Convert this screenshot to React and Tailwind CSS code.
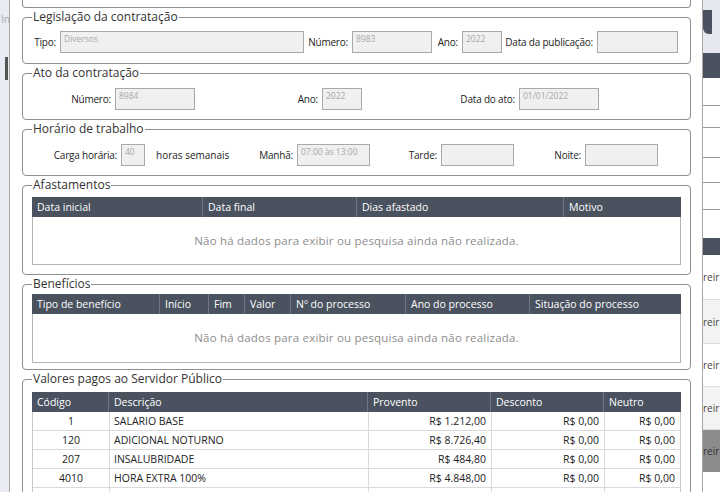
import React from 'react';

const Label = ({ className, children }) => (
  <span className={`shrink-0 text-right pr-[4px] text-[10px] leading-[22px] text-[#222] whitespace-nowrap tracking-[-0.2px] ${className}`}>
    {children}
  </span>
);

const Campo = ({ className, value }) => (
  <div className={`shrink-0 h-[22px] bg-[#f0f0f0] border border-[#a9a9a9] px-[3px] pt-[3px] text-[8.5px] leading-none text-[#a8a8a8] ${className}`}>
    {value}
  </div>
);

const Grupo = ({ titulo, className, children }) => (
  <fieldset className={`border border-[#8f8f8f] rounded-[4px] px-[9px] ${className}`}>
    <legend className="px-[1px] text-[12px] leading-[16px] text-[#333]">{titulo}</legend>
    {children}
  </fieldset>
);

const Cabecalho = ({ colunas }) => (
  <div className="flex h-[20px] bg-[#4a525f] text-white text-[10.5px] leading-[20px]">
    {colunas.map((c, i) => (
      <div key={c.nome} className={`${c.w} pl-[5px] whitespace-nowrap ${i > 0 ? 'border-l border-[#6d7581]' : ''}`}>
        {c.nome}
      </div>
    ))}
  </div>
);

const Vazio = ({ className }) => (
  <div className={`flex items-center justify-center bg-white border-x border-b border-[#b4b4b4] text-[11.5px] text-[#8d8d8d] tracking-[0.2px] ${className}`}>
    Não há dados para exibir ou pesquisa ainda não realizada.
  </div>
);

const colAfast = [
  { nome: 'Data inicial', w: 'w-[170px]' },
  { nome: 'Data final', w: 'w-[154px]' },
  { nome: 'Dias afastado', w: 'w-[207px]' },
  { nome: 'Motivo', w: 'flex-1' },
];

const colBenef = [
  { nome: 'Tipo de benefício', w: 'w-[127px]' },
  { nome: 'Início', w: 'w-[49px]' },
  { nome: 'Fim', w: 'w-[36px]' },
  { nome: 'Valor', w: 'w-[46px]' },
  { nome: 'Nº do processo', w: 'w-[115px]' },
  { nome: 'Ano do processo', w: 'w-[124px]' },
  { nome: 'Situação do processo', w: 'flex-1' },
];

const colValores = [
  { nome: 'Código', w: 'w-[76px]' },
  { nome: 'Descrição', w: 'w-[259px]' },
  { nome: 'Provento', w: 'w-[123px]' },
  { nome: 'Desconto', w: 'w-[113px]' },
  { nome: 'Neutro', w: 'flex-1' },
];

const valores = [
  ['1', 'SALARIO BASE', 'R$ 1.212,00', 'R$ 0,00', 'R$ 0,00'],
  ['120', 'ADICIONAL NOTURNO', 'R$ 8.726,40', 'R$ 0,00', 'R$ 0,00'],
  ['207', 'INSALUBRIDADE', 'R$ 484,80', 'R$ 0,00', 'R$ 0,00'],
  ['4010', 'HORA EXTRA 100%', 'R$ 4.848,00', 'R$ 0,00', 'R$ 0,00'],
  ['8001', 'VALE', 'R$ 0,00', 'R$ 212,00', 'R$ 0,00'],
];

const FaixaDireita = () => (
  <div className="w-[17px] shrink-0 flex flex-col bg-[#e5e8ef] overflow-hidden">
    <div className="h-[10px]" />
    <div className="h-[25px] flex">
      <div className="w-[9px] bg-[#4a525f] rounded-bl-[6px]" />
    </div>
    <div className="h-[20px]" />
    <div className="h-[25px] bg-[#4a525f]" />
    <div className="h-[165px] bg-white flex flex-col">
      <div className="h-[28px] border-b border-[#9a9a9a]" />
      <div className="h-[22px] border-b border-[#9a9a9a]" />
      <div className="h-[30px] border-b border-[#9a9a9a]" />
      <div className="h-[25px] border-b border-[#9a9a9a]" />
      <div className="h-[27px] border-b border-[#9a9a9a]" />
    </div>
    <div className="h-[18px] bg-[#4a525f]" />
    <div className="bg-white text-[10px] text-[#444] leading-none">
      <div className="h-[45px] flex items-center border-b border-[#ddd]">reir</div>
      <div className="h-[44px] flex items-center border-b border-[#ddd] bg-[#f3f3f3]">reir</div>
      <div className="h-[43px] flex items-center border-b border-[#ddd]">reir</div>
      <div className="h-[43px] flex items-center border-b border-[#ddd] bg-[#f3f3f3]">reir</div>
      <div className="h-[42px] flex items-center bg-[#8c8c8c] text-[#333]">reir</div>
      <div className="h-[20px]" />
    </div>
  </div>
);

export default function App() {
  return (
    <div className="w-[720px] h-[492px] overflow-hidden flex bg-[#e8ebf3] font-['Open_Sans',sans-serif]">
      {/* faixa esquerda */}
      <div className="w-[9px] shrink-0 relative">
        <span className="absolute left-[1px] top-[12px] text-[10px] text-[#a4a9b4]">In</span>
        <div className="absolute left-[5px] top-[57px] w-[3px] h-[23px] bg-[#555]" />
      </div>

      {/* janela */}
      <div className="w-[694px] shrink-0 bg-white border-x border-[#a7a7a7] pl-[12px] pr-[11px] flex flex-col gap-[1px]">
        <div className="h-[8px] shrink-0 border-x border-b border-[#8f8f8f] rounded-b-[4px]" />

        <Grupo titulo="Legislação da contratação" className="pt-[6px] pb-[10px]">
          <div className="flex">
            <Label className="w-[28px]">Tipo:</Label>
            <Campo className="w-[244px]" value="Diversos" />
            <Label className="w-[48px]">Número:</Label>
            <Campo className="w-[80px]" value="8983" />
            <Label className="w-[30px]">Ano:</Label>
            <Campo className="w-[40px]" value="2022" />
            <Label className="w-[95px]">Data da publicação:</Label>
            <Campo className="w-[81px]" value="" />
          </div>
        </Grupo>

        <Grupo titulo="Ato da contratação" className="pt-[7px] pb-[9px]">
          <div className="flex">
            <Label className="w-[83px]">Número:</Label>
            <Campo className="w-[80px]" value="8984" />
            <Label className="w-[127px]">Ano:</Label>
            <Campo className="w-[40px]" value="2022" />
            <Label className="w-[157px]">Data do ato:</Label>
            <Campo className="w-[80px]" value="01/01/2022" />
          </div>
        </Grupo>

        <Grupo titulo="Horário de trabalho" className="pt-[7px] pb-[9px]">
          <div className="flex">
            <Label className="w-[89px]">Carga horária:</Label>
            <Campo className="w-[24px]" value="40" />
            <span className="w-[85px] shrink-0 pl-[11px] text-[10px] leading-[22px] text-[#222] whitespace-nowrap">horas semanais</span>
            <Label className="w-[67px]">Manhã:</Label>
            <Campo className="w-[73px]" value="07:00 às 13:00" />
            <Label className="w-[71px]">Tarde:</Label>
            <Campo className="w-[73px]" value="" />
            <Label className="w-[71px]">Noite:</Label>
            <Campo className="w-[73px]" value="" />
          </div>
        </Grupo>

        <Grupo titulo="Afastamentos" className="pt-[4px] pb-[9px]">
          <Cabecalho colunas={colAfast} />
          <Vazio className="h-[48px]" />
        </Grupo>

        <Grupo titulo="Benefícios" className="pt-[2px] pb-[6px]">
          <Cabecalho colunas={colBenef} />
          <Vazio className="h-[49px]" />
        </Grupo>

        <Grupo titulo="Valores pagos ao Servidor Público" className="pt-[5px] pb-[9px]">
          <Cabecalho colunas={colValores} />
          <div className="border-x border-[#c8c8c8] text-[10.5px] text-[#222]">
            {valores.map((v) => (
              <div key={v[0]} className="flex h-[19px] leading-[18px] border-b border-[#dadada]">
                <div className="w-[76px] text-center">{v[0]}</div>
                <div className="w-[259px] pl-[4px] border-l border-[#dadada]">{v[1]}</div>
                <div className="w-[123px] pr-[5px] text-right border-l border-[#dadada]">{v[2]}</div>
                <div className="w-[113px] pr-[5px] text-right border-l border-[#dadada]">{v[3]}</div>
                <div className="flex-1 pr-[5px] text-right border-l border-[#dadada]">{v[4]}</div>
              </div>
            ))}
          </div>
        </Grupo>
      </div>

      <FaixaDireita />
    </div>
  );
}
